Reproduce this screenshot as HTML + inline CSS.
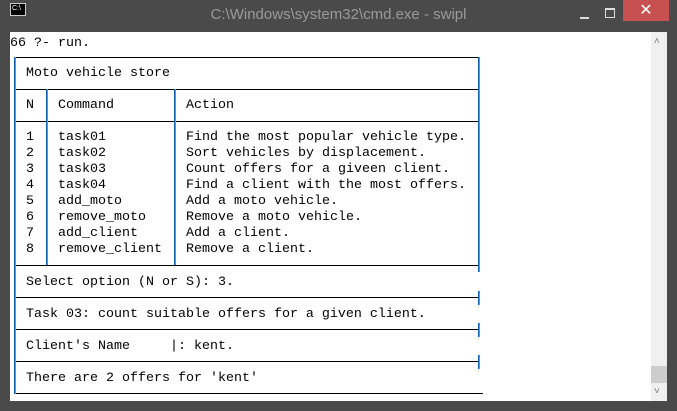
<!DOCTYPE html>
<html><head><style>
body{margin:0;width:677px;height:411px;background:#4a4a4a;position:relative;overflow:hidden;font-family:"Liberation Mono",monospace;}
.t{position:absolute;font-size:13.33px;line-height:16px;color:#000;white-space:pre;}
.h{position:absolute;height:1px;background:#000;}
.v{position:absolute;width:1px;background:#1060b0;box-shadow:1px 0 0 #c08040;}
</style></head><body>
<div style="position:absolute;left:10px;top:3px;width:14px;height:11px;background:#000;border:1px solid #ccc;"></div>
<div style="position:absolute;left:12px;top:5px;color:#fff;font-size:7px;font-family:'Liberation Sans',sans-serif;">C:\</div>
<div style="position:absolute;left:0;width:677px;top:6px;text-align:center;color:#9a9a9a;font-family:'Liberation Sans',sans-serif;font-size:15px;">C:\Windows\system32\cmd.exe - swipl</div>
<div style="position:absolute;left:580px;top:17px;width:9px;height:2px;background:#ddd;"></div>
<div style="position:absolute;left:605px;top:8px;width:8px;height:7px;border:1px solid #ddd;border-top-width:2px;"></div>
<div style="position:absolute;left:623px;top:0;width:46px;height:21px;background:#c75050;color:#fff;text-align:center;font-family:'Liberation Sans',sans-serif;font-size:16px;line-height:21px;">✕</div>
<div style="position:absolute;left:10px;top:32px;width:641px;height:369px;background:#fff;"></div>
<div style="position:absolute;left:651px;top:32px;width:16px;height:369px;background:#f0f0f0;"></div>
<div style="position:absolute;left:651px;top:366px;width:16px;height:17px;background:#cdcdcd;"></div>
<div style="position:absolute;left:654px;top:36px;color:#777;font-size:10px;font-family:'Liberation Sans',sans-serif;">˄</div>
<div style="position:absolute;left:654px;top:386px;color:#777;font-size:10px;font-family:'Liberation Sans',sans-serif;">˅</div>

<div class="t" style="left:10px;top:36px">66 ?- run.</div>
<div class="h" style="left:14px;top:57px;width:465px"></div>
<div class="h" style="left:14px;top:89px;width:465px"></div>
<div class="h" style="left:14px;top:121px;width:465px"></div>
<div class="h" style="left:14px;top:265px;width:465px"></div>
<div class="h" style="left:14px;top:297px;width:465px"></div>
<div class="h" style="left:14px;top:329px;width:465px"></div>
<div class="h" style="left:14px;top:361px;width:465px"></div>
<div class="h" style="left:14px;top:393px;width:469px"></div>
<div class="v" style="left:14px;top:57px;height:337px"></div>
<div class="v" style="left:478px;top:57px;height:215px"></div>
<div class="v" style="left:478px;top:291px;height:14px"></div>
<div class="v" style="left:478px;top:323px;height:14px"></div>
<div class="v" style="left:478px;top:355px;height:14px"></div>
<div class="v" style="left:46px;top:89px;height:176px"></div>
<div class="v" style="left:174px;top:89px;height:176px"></div>

<div class="t" style="left:26px;top:66px">Moto vehicle store</div>
<div class="t" style="left:26px;top:98px">N</div>
<div class="t" style="left:58px;top:98px">Command</div>
<div class="t" style="left:186px;top:98px">Action</div>
<div class="t" style="left:26px;top:130px">1
2
3
4
5
6
7
8</div>
<div class="t" style="left:58px;top:130px">task01
task02
task03
task04
add_moto
remove_moto
add_client
remove_client</div>
<div class="t" style="left:186px;top:130px">Find the most popular vehicle type.
Sort vehicles by displacement.
Count offers for a giveen client.
Find a client with the most offers.
Add a moto vehicle.
Remove a moto vehicle.
Add a client.
Remove a client.</div>
<div class="t" style="left:26px;top:275px">Select option (N or S): 3.</div>
<div class="t" style="left:26px;top:307px">Task 03: count suitable offers for a given client.</div>
<div class="t" style="left:26px;top:339px">Client's Name     |: kent.</div>
<div class="t" style="left:26px;top:371px">There are 2 offers for 'kent'</div>
</body></html>
